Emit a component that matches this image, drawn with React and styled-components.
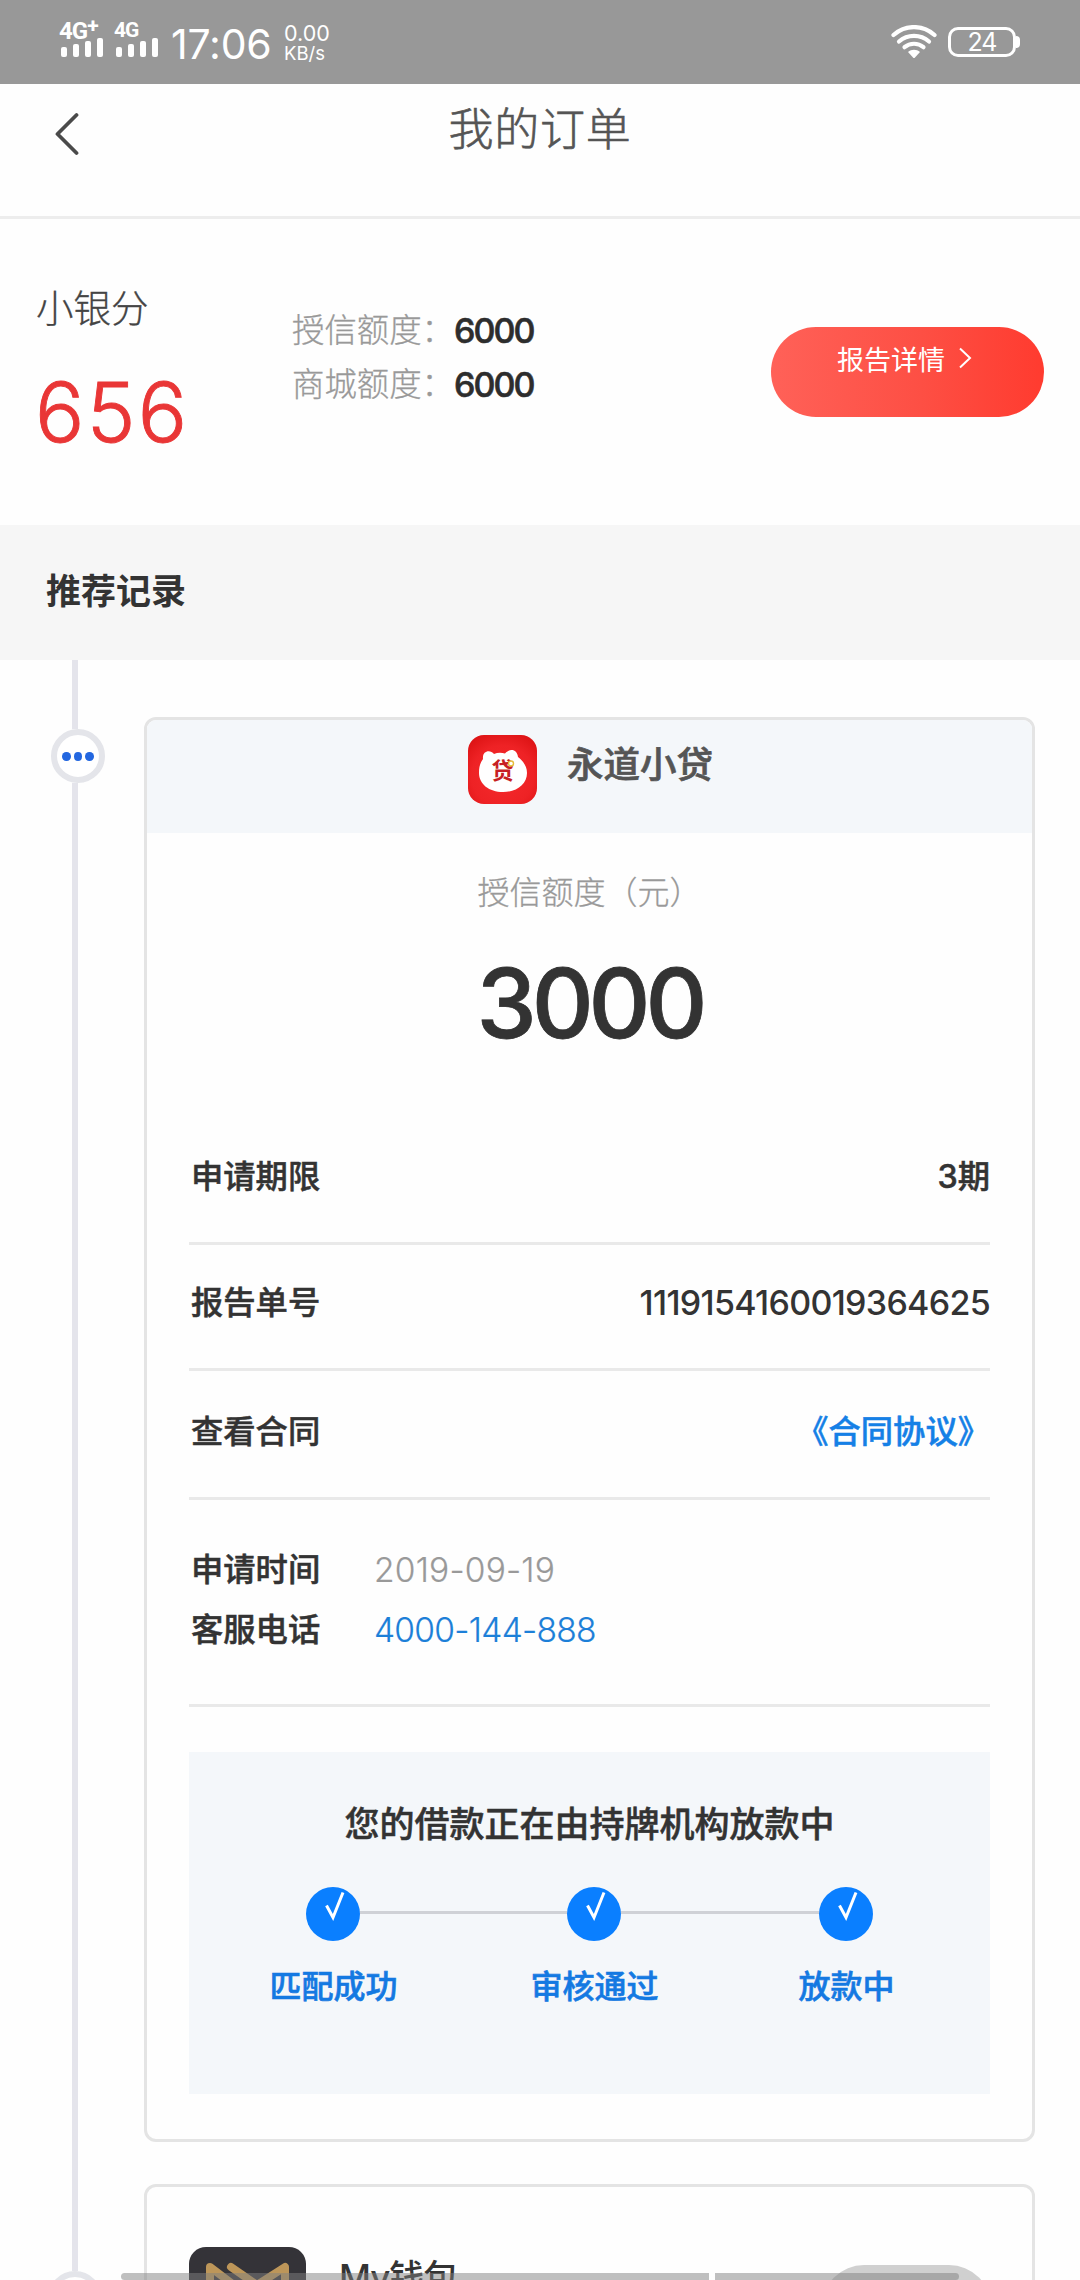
import React from 'react';
import styled, { createGlobalStyle } from 'styled-components';

const GlobalStyle = createGlobalStyle`
    * {
        box-sizing: border-box;
    }
    body {
        margin: 0;
        background-color: #fefefe;
        font-family: Inter, "Noto Sans CJK SC", sans-serif;
        color: #333;
        overflow: hidden;
    }
`;

const Page = styled.div`
    width: 1080px;
    height: 2280px;
    overflow: hidden;
    position: relative;
    background-color: #fefefe;
`;

const StatusBar = styled.div`
    height: 84px;
    padding: 0 60px;
    background-color: #989898;
    color: white;
    display: flex;
    justify-content: space-between;
`;

const StatusGroup = styled.div`
    display: flex;
    align-items: flex-start;
`;

const Signal = styled.div`
    width: 43px;
    margin-right: 12px;
    padding-top: 20px;
`;

const Network = styled.div`
    height: 18px;
    margin-left: -1px;
    display: flex;
    font-family: Roboto, sans-serif;
    font-size: ${props => props.$size}px;
    line-height: ${props => props.$size - 1}px;
    font-weight: 700;
    letter-spacing: -1px;
    white-space: nowrap;
`;

const Plus = styled.span`
    font-size: 21px;
    line-height: 13px;
`;

const Bars = styled.div`
    height: 19px;
    padding-left: 1px;
    display: flex;
    align-items: flex-end;
    gap: 6px;
`;

const Bar = styled.div`
    width: 6px;
    height: ${props => props.$height}px;
    border-radius: 2px;
    background-color: white;
`;

const Clock = styled.div`
    width: 113px;
    margin-left: 1px;
    padding-top: 19px;
    font-size: 41px;
    line-height: 50px;
    letter-spacing: -0.2px;
`;

const Speed = styled.div`
    padding-top: 22px;
    font-size: 21.5px;
    line-height: 22px;
    small {
        display: block;
        font-size: 18.5px;
        line-height: 19px;
    }
`;

const WifiIcon = styled.svg`
    width: 46px;
    height: 34px;
    margin: 25px 11px 0 0;
`;

const Battery = styled.div`
    width: 68px;
    height: 30px;
    margin-top: 27px;
    border: 3px solid white;
    border-radius: 10px;
    font-size: 25px;
    line-height: 25px;
    text-align: center;
    letter-spacing: -1px;
`;

const BatteryTip = styled.div`
    width: 4px;
    height: 12px;
    margin-top: 36px;
    border-radius: 0 4px 4px 0;
    background-color: white;
`;

const Header = styled.header`
    height: 135px;
    padding: 28px 0 0 53px;
    border-bottom: 3px solid #ededed;
    display: grid;
    grid-template-columns: 26px 1fr 79px;
`;

const BackIcon = styled.svg`
    width: 26px;
    height: 44px;
`;

const Title = styled.h1`
    margin: 0;
    padding-top: 3px;
    font-size: 45px;
    line-height: 30px;
    font-weight: 300;
    letter-spacing: 0.8px;
    text-align: center;
    color: #555;
    -webkit-text-stroke: 0.6px currentColor;
`;

const ScoreSection = styled.section`
    height: 306px;
    padding: 0 36px;
    display: grid;
    grid-template-columns: 256px 1fr 273px;
    align-items: start;
`;

const ScoreBox = styled.div`
    padding-top: 61px;
`;

const ScoreLabel = styled.div`
    font-size: 37.5px;
    line-height: 58px;
    font-weight: 300;
    color: #444;
    -webkit-text-stroke: 0.3px currentColor;
`;

const ScoreValue = styled.div`
    margin: 24px 0 0 -1px;
    font-size: 82px;
    line-height: 101px;
    font-weight: 300;
    letter-spacing: 2.4px;
    color: #e93636;
    -webkit-text-stroke: 0.9px currentColor;
`;

const Limits = styled.div`
    padding-top: 85px;
`;

const Limit = styled.div`
    height: 54px;
    display: flex;
    align-items: center;
    font-size: 32.4px;
    line-height: 48px;
    font-weight: 300;
    color: #999;
    -webkit-text-stroke: 0.3px currentColor;
    strong {
        font-size: 34px;
        font-weight: 500;
        letter-spacing: -1.9px;
        color: #2d2d2d;
        -webkit-text-stroke: 0.6px currentColor;
    }
`;

const ReportButton = styled.button`
    height: 90px;
    margin-top: 108px;
    padding: 16px 0 0 66px;
    border: 0;
    border-radius: 45px;
    background: linear-gradient(90deg, #ff6158 0%, #fd4f44 55%, #ff3b2f 100%);
    color: white;
    font-family: inherit;
    font-size: 27px;
    line-height: 36px;
    display: flex;
    align-items: flex-start;
`;

const Chevron = styled.svg`
    width: 14px;
    height: 22px;
    margin: 4px 0 0 13px;
`;

const SectionTitle = styled.h2`
    height: 135px;
    margin: 0;
    padding-left: 46px;
    background-color: #f6f6f6;
    font-size: 35px;
    line-height: 132px;
    font-weight: 700;
`;

const Timeline = styled.section`
    height: 1620px;
    display: flex;
    overflow: hidden;
`;

const Rail = styled.div`
    width: 144px;
    padding-left: 48px;
    flex-shrink: 0;
    display: flex;
    flex-direction: column;
`;

const Line = styled.div`
    width: 6px;
    height: ${props => props.$height}px;
    margin-left: 24px;
    flex-shrink: 0;
    background-color: #e4e4eb;
`;

const Node = styled.div`
    width: 54px;
    height: 54px;
    margin-left: ${props => props.$offset}px;
    flex-shrink: 0;
    border: 6px solid #e4e5ea;
    border-radius: 50%;
    background-color: white;
    display: flex;
    align-items: center;
    justify-content: center;
    gap: 3px;
`;

const Dot = styled.div`
    width: 8.5px;
    height: 9px;
    border-radius: 50%;
    background-color: #2367e0;
`;

const Cards = styled.div`
    width: 891px;
    padding-top: 57px;
    flex-shrink: 0;
    display: flex;
    flex-direction: column;
    gap: 42px;
`;

const Card = styled.article`
    height: 1425px;
    flex-shrink: 0;
    border: 3px solid #e4e4e4;
    border-radius: 12px;
    overflow: hidden;
`;

const CardHeader = styled.div`
    height: 113px;
    padding: 15px 0 0 2px;
    background-color: #f4f7fa;
    display: flex;
    justify-content: center;
    gap: 30px;
`;

const LoanLogo = styled.svg`
    width: 69px;
    height: 69px;
`;

const LenderName = styled.div`
    font-size: 36.5px;
    line-height: 60px;
    font-weight: 500;
    color: #555;
    -webkit-text-stroke: 0.7px currentColor;
`;

const Amount = styled.div`
    height: 262px;
    padding-top: 36px;
    text-align: center;
`;

const AmountLabel = styled.div`
    font-size: 32px;
    line-height: 48px;
    font-weight: 300;
    color: #999;
    -webkit-text-stroke: 0.3px currentColor;
`;

const AmountValue = styled.div`
    margin-top: 25px;
    font-size: 96px;
    line-height: 122px;
    font-weight: 500;
    letter-spacing: -5px;
    -webkit-text-stroke: 0.8px currentColor;
`;

const Details = styled.div`
    padding: 0 42px;
`;

const Row = styled.div`
    height: ${props => props.$height}px;
    padding: ${props => props.$top}px 0 0 2px;
    border-bottom: 3px solid #e9e9e9;
    display: flex;
    justify-content: space-between;
    font-size: 32.3px;
    line-height: 48px;
    font-weight: 500;
    -webkit-text-stroke: 0.5px currentColor;
`;

const RowValue = styled.span`
    font-size: ${props => props.$size || 34}px;
    letter-spacing: ${props => props.$spacing || 0}px;
    color: ${props => props.$link ? '#1580e6' : '#333'};
    -webkit-text-stroke: ${props => props.$spacing ? 0 : 0.5}px currentColor;
`;

const Contact = styled.div`
    height: 207px;
    padding: 40px 0 0 2px;
    border-bottom: 3px solid #e9e9e9;
`;

const ContactRow = styled.div`
    height: 60px;
    display: grid;
    grid-template-columns: 183px 1fr;
    align-items: center;
    font-size: 32.3px;
    line-height: 48px;
    font-weight: 500;
    -webkit-text-stroke: 0.5px currentColor;
    span {
        font-size: 33.5px;
        font-weight: 300;
        letter-spacing: ${props => props.$link ? -0.7 : 0.2}px;
        color: ${props => props.$link ? '#1c7fd8' : '#999'};
        -webkit-text-stroke: 0.2px currentColor;
    }
`;

const Progress = styled.div`
    height: 342px;
    margin-top: 45px;
    padding-top: 47px;
    background-color: #f4f7fa;
`;

const ProgressTitle = styled.div`
    font-size: 35px;
    line-height: 50px;
    font-weight: 500;
    text-align: center;
    -webkit-text-stroke: 0.5px currentColor;
`;

const Steps = styled.div`
    margin-top: 38px;
    padding-left: 117px;
    display: flex;
`;

const Step = styled.div`
    width: 54px;
    display: flex;
    flex-direction: column;
    align-items: center;
`;

const CheckIcon = styled.svg`
    width: 54px;
    height: 54px;
    flex-shrink: 0;
    border-radius: 50%;
    background-color: #0a7fff;
`;

const StepLabel = styled.div`
    margin-top: 22px;
    padding-left: 1px;
    font-size: 32px;
    line-height: 48px;
    font-weight: 500;
    white-space: nowrap;
    color: #1479e2;
    -webkit-text-stroke: 0.6px currentColor;
`;

const Connector = styled.div`
    width: ${props => props.$width}px;
    height: 3px;
    margin-top: 24px;
    background-color: #cfd1d6;
`;

const NextOffer = styled.div`
    padding: 60px 0 0 42px;
    display: flex;
    gap: 33px;
`;

const WalletLogo = styled.svg`
    width: 117px;
    height: 117px;
`;

const WalletName = styled.div`
    font-size: 35px;
    line-height: 60px;
    font-weight: 500;
    letter-spacing: -1px;
`;

const FloatingPill = styled.div`
    position: absolute;
    left: 822px;
    top: 2265px;
    width: 169px;
    height: 84px;
    border-radius: 42px;
    background-color: #d0d0d0;
`;

const HomeIndicator = styled.div`
    position: absolute;
    left: 121px;
    right: 121px;
    top: 2273px;
    height: 7px;
    display: flex;
    gap: 6px;
`;

const IndicatorPart = styled.div`
    width: ${props => props.$width}px;
    border-radius: ${props => props.$radius};
    background-color: rgba(128, 128, 128, 0.5);
`;

const steps = [
    { label: '匹配成功', line: 207 },
    { label: '审核通过', line: 198 },
    { label: '放款中', line: 0 },
];

const SignalMeter = ({ size, plus }) => (
    <Signal>
        <Network $size={size}>4G{plus && <Plus>+</Plus>}</Network>
        <Bars>
            {[10, 13, 16, 19].map(height => <Bar key={height} $height={height} />)}
        </Bars>
    </Signal>
);

const Status = () => (
    <StatusBar>
        <StatusGroup>
            <SignalMeter size={24} plus />
            <SignalMeter size={21} />
            <Clock>17:06</Clock>
            <Speed>0.00<small>KB/s</small></Speed>
        </StatusGroup>
        <StatusGroup>
            <WifiIcon viewBox="0 0 46 34" fill="none" stroke="white" strokeWidth="4.2" strokeLinecap="round">
                <path d="M2.5 10C14 -0.6 32 -0.6 43.500 10" />
                <path d="M8 16.500C16.500 9 29.500 9 38 16.500" />
                <path d="M13.500 22.200C19 17.600 27 17.600 32.500 22.200" />
                <path d="M17 27C20.500 24 25.500 24 29 27L24 32.500Q23 33.500 22 32.500Z" fill="white" stroke="none" />
            </WifiIcon>
            <Battery>24</Battery>
            <BatteryTip />
        </StatusGroup>
    </StatusBar>
);

const App = () => {
    return (
        <Page>
            <GlobalStyle />
            <Status />
            <Header>
                <BackIcon viewBox="0 0 26 44" fill="none" stroke="#4a4a4a" strokeWidth="3.8" strokeLinecap="round" strokeLinejoin="round">
                    <path d="M23.500 3L4.500 22L23.500 41" />
                </BackIcon>
                <Title>我的订单</Title>
            </Header>
            <ScoreSection>
                <ScoreBox>
                    <ScoreLabel>小银分</ScoreLabel>
                    <ScoreValue>656</ScoreValue>
                </ScoreBox>
                <Limits>
                    <Limit>授信额度：<strong>6000</strong></Limit>
                    <Limit>商城额度：<strong>6000</strong></Limit>
                </Limits>
                <ReportButton>
                    报告详情
                    <Chevron viewBox="0 0 14 22" fill="none" stroke="white" strokeWidth="2">
                        <path d="M2 1.500L12 11L2 20.500" />
                    </Chevron>
                </ReportButton>
            </ScoreSection>
            <SectionTitle>推荐记录</SectionTitle>
            <Timeline>
                <Rail>
                    <Line $height={69} />
                    <Node $offset={3}>
                        <Dot />
                        <Dot />
                        <Dot />
                    </Node>
                    <Line $height={1488} />
                    <Node $offset={0} />
                </Rail>
                <Cards>
                    <Card>
                        <CardHeader>
                            <LoanLogo viewBox="0 0 69 69">
                                <defs>
                                    <radialGradient id="loan" cx="0.5" cy="0.6" r="0.75">
                                        <stop offset="0" stopColor="#f52a2c" />
                                        <stop offset="0.6" stopColor="#ee2225" />
                                        <stop offset="1" stopColor="#d80f10" />
                                    </radialGradient>
                                </defs>
                                <rect width="69" height="69" rx="16" fill="url(#loan)" />
                                <path d="M15 24C14 16 22 14 26 19Q31 17 37 18.500C42 13 49 14 50 22C55 26 59 31 59 38C59 49 49 57 35 57C21 57 11 49 11 38C11 32 12 28 15 24Z" fill="white" />
                                <text x="23.500" y="44" fontSize="22.500" fontWeight="700" fill="#c71f24">贷</text>
                                <circle cx="43" cy="28.500" r="2.500" fill="white" stroke="#e5bd3c" strokeWidth="1.400" />
                            </LoanLogo>
                            <LenderName>永道小贷</LenderName>
                        </CardHeader>
                        <Amount>
                            <AmountLabel>授信额度（元）</AmountLabel>
                            <AmountValue>3000</AmountValue>
                        </Amount>
                        <Details>
                            <Row $height={150} $top={58}>
                                申请期限
                                <RowValue $size={32.3}>3期</RowValue>
                            </Row>
                            <Row $height={126} $top={34}>
                                报告单号
                                <RowValue $spacing={-0.7}>1119154160019364625</RowValue>
                            </Row>
                            <Row $height={129} $top={37}>
                                查看合同
                                <RowValue $size={32.3} $link>《合同协议》</RowValue>
                            </Row>
                            <Contact>
                                <ContactRow>申请时间<span>2019-09-19</span></ContactRow>
                                <ContactRow $link>客服电话<span>4000-144-888</span></ContactRow>
                            </Contact>
                            <Progress>
                                <ProgressTitle>您的借款正在由持牌机构放款中</ProgressTitle>
                                <Steps>
                                    {steps.map(step => (
                                        <React.Fragment key={step.label}>
                                            <Step>
                                                <CheckIcon viewBox="0 0 54 54" fill="none" stroke="white" strokeWidth="3">
                                                    <path d="M20.500 18.500L27 30.500L37 5.500" />
                                                </CheckIcon>
                                                <StepLabel>{step.label}</StepLabel>
                                            </Step>
                                            {step.line > 0 && <Connector $width={step.line} />}
                                        </React.Fragment>
                                    ))}
                                </Steps>
                            </Progress>
                        </Details>
                    </Card>
                    <Card>
                        <NextOffer>
                            <WalletLogo viewBox="0 0 117 117">
                                <rect width="117" height="117" rx="17" fill="#343338" />
                                <g fill="none" stroke="#bd9659" strokeWidth="8" strokeLinecap="round" strokeLinejoin="round">
                                    <path d="M21 96V20L58 48" />
                                    <path d="M42 20L68 38L96 20V96" />
                                </g>
                            </WalletLogo>
                            <WalletName>My钱包</WalletName>
                        </NextOffer>
                    </Card>
                </Cards>
            </Timeline>
            <FloatingPill />
            <HomeIndicator>
                <IndicatorPart $width={588} $radius="4px 0 0 4px" />
                <IndicatorPart $width={244} $radius="0 4px 4px 0" />
            </HomeIndicator>
        </Page>
    );
};

export default App;
